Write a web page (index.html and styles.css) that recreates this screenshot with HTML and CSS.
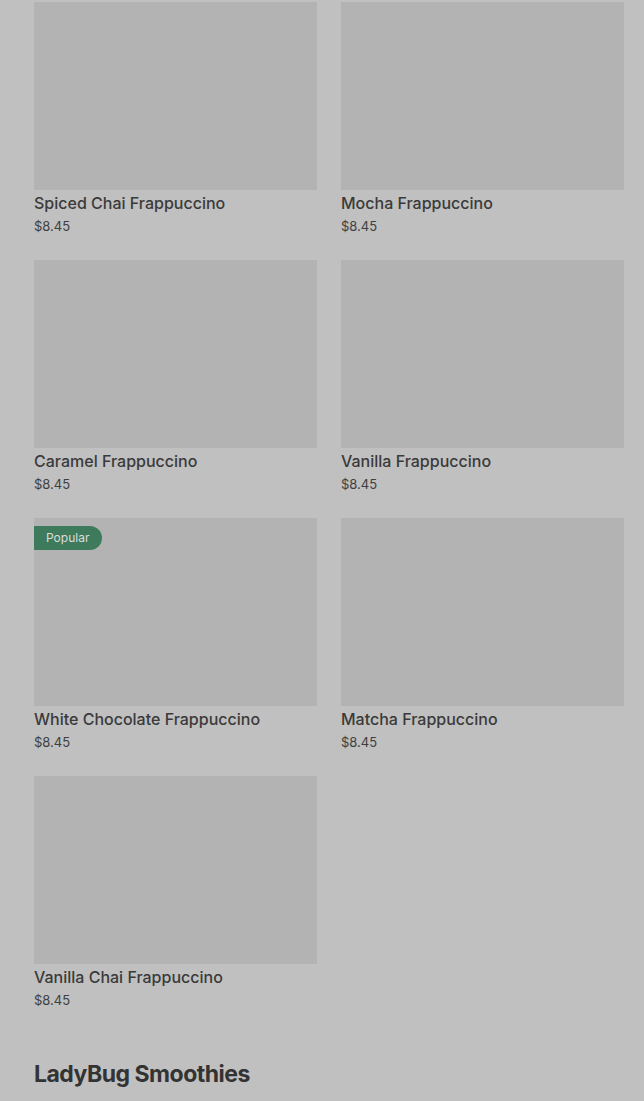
FILE: index.html
```html
<!DOCTYPE html>
<html lang="en">
<head>
    <meta charset="UTF-8">
    <meta name="viewport" content="width=device-width, initial-scale=1.0">
    <title>Menu</title>
    <link rel="stylesheet" href="styles.css">
</head>
<body>
    <div class="menu">
        <div class="item-grid">
            <div class="item">
                <div class="item-photo"></div>
                <div class="item-name">Spiced Chai Frappuccino</div>
                <div class="item-price">$8.45</div>
            </div>
            <div class="item">
                <div class="item-photo"></div>
                <div class="item-name">Mocha Frappuccino</div>
                <div class="item-price">$8.45</div>
            </div>
            <div class="item">
                <div class="item-photo"></div>
                <div class="item-name">Caramel Frappuccino</div>
                <div class="item-price">$8.45</div>
            </div>
            <div class="item">
                <div class="item-photo"></div>
                <div class="item-name">Vanilla Frappuccino</div>
                <div class="item-price">$8.45</div>
            </div>
            <div class="item">
                <div class="item-photo">
                    <span class="badge">Popular</span>
                </div>
                <div class="item-name">White Chocolate Frappuccino</div>
                <div class="item-price">$8.45</div>
            </div>
            <div class="item">
                <div class="item-photo"></div>
                <div class="item-name">Matcha Frappuccino</div>
                <div class="item-price">$8.45</div>
            </div>
            <div class="item">
                <div class="item-photo"></div>
                <div class="item-name">Vanilla Chai Frappuccino</div>
                <div class="item-price">$8.45</div>
            </div>
        </div>

        <h2 class="section-title">LadyBug Smoothies</h2>
    </div>
</body>
</html>
```

FILE: styles.css
```css
html {
    background-color: #c0c0c0;
}

body {
    margin: 0;
    font-family: Inter, "Liberation Sans", sans-serif;
    color: #383838;
    background-color: #c0c0c0;
}

.menu {
    padding: 2px 20px 0 34px;
}

.item-grid {
    display: grid;
    grid-template-columns: 283px 283px;
    column-gap: 24px;
    row-gap: 25px;
}

.item-photo {
    position: relative;
    height: 188px;
    background-color: #b3b3b3;
}

.badge {
    position: absolute;
    top: 8px;
    left: 0;
    height: 24px;
    line-height: 24px;
    padding: 0 13px 0 12px;
    font-size: 12px;
    color: #dcdcdc;
    background-color: #3d7b5c;
    border-radius: 0 12px 12px 0;
}

.item-name {
    margin-top: 3px;
    font-size: 16px;
    line-height: 20px;
    font-weight: 500;
    color: #3a3a3a;
}

.item-price {
    margin-top: 4px;
    font-size: 13px;
    line-height: 18px;
    color: #3f3f3f;
}

.section-title {
    margin: 49px 0 0;
    font-size: 23px;
    line-height: 32px;
    font-weight: 700;
    letter-spacing: -0.5px;
    color: #333;
}
```
